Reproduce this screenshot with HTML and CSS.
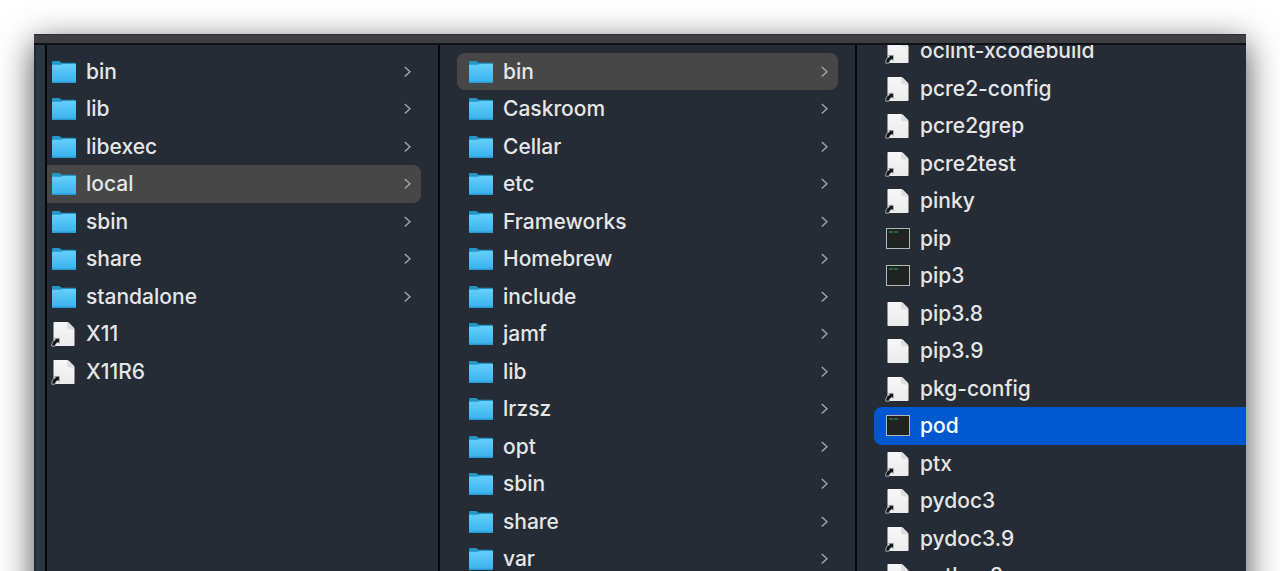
FILE: index.html
```html
<!DOCTYPE html>
<html lang="en">
<head>
<meta charset="utf-8">
<title>local</title>
<link rel="stylesheet" href="styles.css">
</head>
<body>
<svg class="sprite" aria-hidden="true">
  <defs>
    <linearGradient id="folder-front" x1="0" y1="0" x2="0" y2="1">
      <stop offset="0" stop-color="#65cffb"/>
      <stop offset="1" stop-color="#38b1ec"/>
    </linearGradient>
    <linearGradient id="paper" x1="0" y1="0" x2="0" y2="1">
      <stop offset="0" stop-color="#f7f7f7"/>
      <stop offset="1" stop-color="#ebebeb"/>
    </linearGradient>
  </defs>
  <symbol id="folder" viewBox="0 0 26 26">
    <path d="M1 3.2Q1 2 2.2 2H7.6Q8.6 2 9.4 2.8L10.4 3.8H23.8Q25 3.8 25 5V12H1Z" fill="#2496c6"/>
    <path d="M1 6.4Q1 5.8 1.8 5.8H9.2Q10 5.8 10.8 5.4Q11.4 5 12.2 5H24.2Q25 5 25 5.8V23Q25 24 24 24H2Q1 24 1 23Z" fill="url(#folder-front)"/>
    <path d="M1 22.6H25V23Q25 24 24 24H2Q1 24 1 23Z" fill="#2a9bd5"/>
  </symbol>
  <symbol id="file" viewBox="0 0 26 26">
    <path d="M2.5 1.8Q2.5 1 3.3 1H15.5Q17 1 18 2L22.5 6.6Q23.5 7.6 23.5 9V24.2Q23.5 25 22.7 25H3.3Q2.5 25 2.5 24.2Z" fill="url(#paper)"/>
    <path d="M16 1.2V6.4Q16 8.4 18 8.4H23.3Q23.3 7.4 22.5 6.6L18 2Q17.2 1.2 16 1.2Z" fill="#dedede"/>
  </symbol>
  <symbol id="alias" viewBox="0 0 26 26">
    <use href="#file"/>
    <path d="M0.8 25.2V23Q1.4 19.4 4.4 18.8L3.2 17.2H8.6V22.8L7 21.4Q4.6 22 4 25.2Z" fill="#15181c" stroke="#d8d8d8" stroke-width="0.7"/>
  </symbol>
  <symbol id="terminal" viewBox="0 0 26 26">
    <rect x="1.5" y="2.5" width="23" height="20" fill="#202321" stroke="#b4b7b9"/>
    <path d="M4 6H8M9 6H13" stroke="#2fae55" stroke-width="1.2"/>
  </symbol>
  <symbol id="chevron" viewBox="0 0 8 12">
    <path d="M1.8 1L7 5.7L1.8 10.4" fill="none" stroke="currentColor" stroke-width="1.4"/>
  </symbol>
</svg>
<main class="window">
  <div class="toolbar"></div>
  <div class="browser">
    <div class="sidebar"></div>
    <ul class="column column-first">
      <li><button class="row"><svg class="icon"><use href="#folder"/></svg><span class="name">bin</span><svg class="chevron"><use href="#chevron"/></svg></button></li>
      <li><button class="row"><svg class="icon"><use href="#folder"/></svg><span class="name">lib</span><svg class="chevron"><use href="#chevron"/></svg></button></li>
      <li><button class="row"><svg class="icon"><use href="#folder"/></svg><span class="name">libexec</span><svg class="chevron"><use href="#chevron"/></svg></button></li>
      <li><button class="row open"><svg class="icon"><use href="#folder"/></svg><span class="name">local</span><svg class="chevron"><use href="#chevron"/></svg></button></li>
      <li><button class="row"><svg class="icon"><use href="#folder"/></svg><span class="name">sbin</span><svg class="chevron"><use href="#chevron"/></svg></button></li>
      <li><button class="row"><svg class="icon"><use href="#folder"/></svg><span class="name">share</span><svg class="chevron"><use href="#chevron"/></svg></button></li>
      <li><button class="row"><svg class="icon"><use href="#folder"/></svg><span class="name">standalone</span><svg class="chevron"><use href="#chevron"/></svg></button></li>
      <li><button class="row"><svg class="icon"><use href="#alias"/></svg><span class="name">X11</span></button></li>
      <li><button class="row"><svg class="icon"><use href="#alias"/></svg><span class="name">X11R6</span></button></li>
    </ul>
    <ul class="column">
      <li><button class="row open"><svg class="icon"><use href="#folder"/></svg><span class="name">bin</span><svg class="chevron"><use href="#chevron"/></svg></button></li>
      <li><button class="row"><svg class="icon"><use href="#folder"/></svg><span class="name">Caskroom</span><svg class="chevron"><use href="#chevron"/></svg></button></li>
      <li><button class="row"><svg class="icon"><use href="#folder"/></svg><span class="name">Cellar</span><svg class="chevron"><use href="#chevron"/></svg></button></li>
      <li><button class="row"><svg class="icon"><use href="#folder"/></svg><span class="name">etc</span><svg class="chevron"><use href="#chevron"/></svg></button></li>
      <li><button class="row"><svg class="icon"><use href="#folder"/></svg><span class="name">Frameworks</span><svg class="chevron"><use href="#chevron"/></svg></button></li>
      <li><button class="row"><svg class="icon"><use href="#folder"/></svg><span class="name">Homebrew</span><svg class="chevron"><use href="#chevron"/></svg></button></li>
      <li><button class="row"><svg class="icon"><use href="#folder"/></svg><span class="name">include</span><svg class="chevron"><use href="#chevron"/></svg></button></li>
      <li><button class="row"><svg class="icon"><use href="#folder"/></svg><span class="name">jamf</span><svg class="chevron"><use href="#chevron"/></svg></button></li>
      <li><button class="row"><svg class="icon"><use href="#folder"/></svg><span class="name">lib</span><svg class="chevron"><use href="#chevron"/></svg></button></li>
      <li><button class="row"><svg class="icon"><use href="#folder"/></svg><span class="name">lrzsz</span><svg class="chevron"><use href="#chevron"/></svg></button></li>
      <li><button class="row"><svg class="icon"><use href="#folder"/></svg><span class="name">opt</span><svg class="chevron"><use href="#chevron"/></svg></button></li>
      <li><button class="row"><svg class="icon"><use href="#folder"/></svg><span class="name">sbin</span><svg class="chevron"><use href="#chevron"/></svg></button></li>
      <li><button class="row"><svg class="icon"><use href="#folder"/></svg><span class="name">share</span><svg class="chevron"><use href="#chevron"/></svg></button></li>
      <li><button class="row"><svg class="icon"><use href="#folder"/></svg><span class="name">var</span><svg class="chevron"><use href="#chevron"/></svg></button></li>
    </ul>
    <ul class="column column-last">
      <li><button class="row"><svg class="icon"><use href="#alias"/></svg><span class="name">oclint-xcodebuild</span></button></li>
      <li><button class="row"><svg class="icon"><use href="#alias"/></svg><span class="name">pcre2-config</span></button></li>
      <li><button class="row"><svg class="icon"><use href="#alias"/></svg><span class="name">pcre2grep</span></button></li>
      <li><button class="row"><svg class="icon"><use href="#alias"/></svg><span class="name">pcre2test</span></button></li>
      <li><button class="row"><svg class="icon"><use href="#alias"/></svg><span class="name">pinky</span></button></li>
      <li><button class="row"><svg class="icon"><use href="#terminal"/></svg><span class="name">pip</span></button></li>
      <li><button class="row"><svg class="icon"><use href="#terminal"/></svg><span class="name">pip3</span></button></li>
      <li><button class="row"><svg class="icon"><use href="#file"/></svg><span class="name">pip3.8</span></button></li>
      <li><button class="row"><svg class="icon"><use href="#file"/></svg><span class="name">pip3.9</span></button></li>
      <li><button class="row"><svg class="icon"><use href="#alias"/></svg><span class="name">pkg-config</span></button></li>
      <li><button class="row selected"><svg class="icon"><use href="#terminal"/></svg><span class="name">pod</span></button></li>
      <li><button class="row"><svg class="icon"><use href="#alias"/></svg><span class="name">ptx</span></button></li>
      <li><button class="row"><svg class="icon"><use href="#alias"/></svg><span class="name">pydoc3</span></button></li>
      <li><button class="row"><svg class="icon"><use href="#alias"/></svg><span class="name">pydoc3.9</span></button></li>
      <li><button class="row"><svg class="icon"><use href="#alias"/></svg><span class="name">python3</span></button></li>
    </ul>
  </div>
</main>
</body>
</html>
```

FILE: styles.css
```css
* {
  box-sizing: border-box;
}

body {
  margin: 0;
  padding: 34px 34px 0;
  height: 100vh;
  overflow: hidden;
  background: #fff;
  color: #e4e6e8;
  font-family: Inter, "Liberation Sans", sans-serif;
  font-size: 21px;
  font-weight: 500;
}

.sprite {
  position: absolute;
  width: 0;
  height: 0;
}

.window {
  display: flex;
  flex-direction: column;
  height: 120vh;
  background: #262c35;
  box-shadow: 0 9px 32px rgba(0, 0, 0, 0.7);
}

.toolbar {
  flex: none;
  height: 11px;
  background: #3d3f42;
  border-top: 1px solid #2c2e31;
  border-bottom: 2px solid #0d1017;
}

.browser {
  flex: 1;
  min-height: 0;
  display: grid;
  grid-template-columns: 11px 393fr 417fr 391fr;
}

.sidebar {
  background: #293840;
  border-left: 2px solid #202b33;
}

.column {
  min-width: 0;
  margin: 0;
  padding: 8px 17px 0;
  overflow: hidden;
  list-style: none;
  border-left: 2px solid #05070b;
}

.column-first {
  padding-left: 0;
}

.column-first .row {
  padding-left: 4px;
  border-radius: 0 8px 8px 0;
}

.column-last {
  padding-top: 0;
  padding-right: 0;
}

.column-last li:first-child {
  margin-top: -13px;
}

.column-last .row {
  border-radius: 8px 0 0 8px;
}

.row {
  display: flex;
  align-items: center;
  gap: 9px;
  width: 100%;
  height: 37px;
  padding: 0 10px 0 11px;
  border: 0;
  border-radius: 8px;
  background: none;
  color: inherit;
  font: inherit;
  text-align: left;
}

.column li:nth-child(even) .row,
.column-last li:nth-child(odd) .row {
  height: 38px;
}

.column-last li:nth-child(even) .row {
  height: 37px;
}

.row.open {
  background: #474747;
}

.row.selected {
  background: #0058d0;
  color: #fff;
}

.icon {
  flex: none;
  width: 26px;
  height: 26px;
}

.name {
  flex: 1;
  white-space: nowrap;
  line-height: 28px;
}

.chevron {
  flex: none;
  width: 8px;
  height: 12px;
  color: #a3a6aa;
}
```
